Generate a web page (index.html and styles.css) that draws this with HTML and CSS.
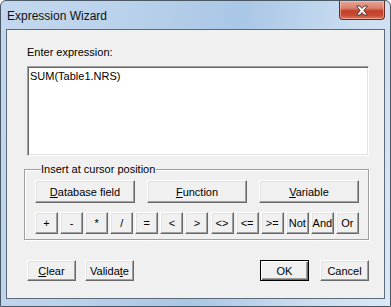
FILE: index.html
```html
<!DOCTYPE html>
<html lang="en">
<head>
  <meta charset="UTF-8" />
  <title>Expression Wizard</title>
  <link rel="stylesheet" href="styles.css">
</head>
<body>
  <div class="window">
    <div class="titlebar">
      <span class="title">Expression Wizard</span>
      <button class="close" type="button" aria-label="Close">
        <svg width="14" height="11" viewBox="0 0 14 11">
          <path d="M1.5 1 H5 L7 3.5 L9 1 H12.5 L8.8 5.5 L12.5 10 H9 L7 7.5 L5 10 H1.5 L5.2 5.5 Z" fill="#fff" stroke="#5a3a36" stroke-width="1" stroke-linejoin="round"/>
        </svg>
      </button>
    </div>

    <div class="client">
      <label class="expr-label" for="expr">Enter expression:</label>
      <textarea id="expr" class="expr">SUM(Table1.NRS)</textarea>

      <fieldset class="insert">
        <legend>Insert at cursor position</legend>
        <div class="big-row">
          <button class="btn" type="button"><u>D</u>atabase field</button>
          <button class="btn" type="button"><u>F</u>unction</button>
          <button class="btn" type="button"><u>V</u>ariable</button>
        </div>
        <div class="op-row">
          <button class="btn op" type="button">+</button>
          <button class="btn op" type="button">-</button>
          <button class="btn op" type="button">*</button>
          <button class="btn op" type="button">/</button>
          <button class="btn op" type="button">=</button>
          <button class="btn op" type="button">&lt;</button>
          <button class="btn op" type="button">&gt;</button>
          <button class="btn op" type="button">&lt;&gt;</button>
          <button class="btn op" type="button">&lt;=</button>
          <button class="btn op" type="button">&gt;=</button>
          <button class="btn op" type="button">Not</button>
          <button class="btn op" type="button">And</button>
          <button class="btn op" type="button">Or</button>
        </div>
      </fieldset>

      <div class="footer">
        <div class="group">
          <button class="btn small" type="button"><u>C</u>lear</button>
          <button class="btn small" type="button">Valida<u>t</u>e</button>
        </div>
        <div class="group wide">
          <button class="btn small default" type="button">OK</button>
          <button class="btn small" type="button">Cancel</button>
        </div>
      </div>
    </div>
  </div>
</body>
</html>
```

FILE: styles.css
```css
body {
  margin: 0;
  background: #fff;
  font-family: "Liberation Sans", Arial, sans-serif;
  font-size: 11px;
  color: #000;
}
.window {
  width: 391px;
  height: 307px;
  box-sizing: border-box;
  border: 1px solid #4a5866;
  border-radius: 6px 6px 0 0;
  padding: 0 5px 7px 5px;
  background: linear-gradient(100deg, #c3d8ee 0%, #b9d1ea 30%, #a9c7e6 55%, #c9dcf0 80%, #dbe8f5 100%);
  display: flex;
  flex-direction: column;
}
.titlebar {
  height: 28px;
  display: flex;
  align-items: flex-start;
}
.title {
  font-size: 12px;
  padding: 8px 0 0 1px;
  color: #111;
}
.close {
  margin-left: auto;
  margin-right: 0;
  width: 46px;
  height: 19px;
  padding: 0;
  border: 1px solid #6b2a22;
  border-top: none;
  border-radius: 0 0 4px 4px;
  background: linear-gradient(#e9a595 0%, #d8816c 40%, #c43f28 55%, #c94b34 80%, #dc7a60 100%);
  box-shadow: inset 0 0 0 1px rgba(255, 210, 200, 0.5);
  display: flex;
  align-items: center;
  justify-content: center;
}
.client {
  flex: 1;
  border: 1px solid #5b6b7c;
  background: #f0f0f0;
  padding: 16px 15px 0 20px;
  display: flex;
  flex-direction: column;
}
.expr-label {
  line-height: 13px;
  margin-bottom: 7px;
}
.expr {
  height: 90px;
  box-sizing: border-box;
  margin: 0;
  padding: 3px 2px;
  resize: none;
  font-family: inherit;
  font-size: 11px;
  border: 1px solid;
  border-color: #a0a0a0 #fff #fff #a0a0a0;
  box-shadow: inset 1px 1px #696969, inset -1px -1px #e3e3e3;
  background: #fff;
  outline: none;
}
.insert {
  margin: 7px 0 0 -3px;
  padding: 4px 9px 5px 10px;
  border: 1px solid #a0a0a0;
  box-shadow: inset 1px 1px #fff, 1px 1px #fff;
  min-width: 0;
}
.insert legend {
  padding: 0 1px 0 0;
  margin-left: 6px;
  line-height: 13px;
}
.btn {
  font-family: inherit;
  font-size: 11px;
  color: #000;
  background: #f0f0f0;
  border: 1px solid;
  border-color: #fff #696969 #696969 #fff;
  box-shadow: inset -1px -1px #a0a0a0, inset 1px 1px #e3e3e3;
  padding: 0;
  border-radius: 0;
}
.big-row {
  display: grid;
  grid-template-columns: 100px 100px 100px;
  justify-content: space-between;
}
.big-row .btn {
  height: 23px;
}
.op-row {
  margin-top: 9px;
  display: grid;
  grid-template-columns: repeat(13, 23px);
  justify-content: space-between;
}
.op-row .btn {
  height: 22px;
}
.footer {
  margin-top: 20px;
  display: flex;
  justify-content: space-between;
}
.group {
  display: flex;
  gap: 9px;
}
.group.wide {
  gap: 11px;
}
.small {
  width: 49px;
  height: 21px;
}
.default {
  outline: 1px solid #000;
  outline-offset: -1px;
  border-color: #000;
  box-shadow: inset 1px 1px #fff, inset -1px -1px #696969, inset -2px -2px #a0a0a0;
}
```
